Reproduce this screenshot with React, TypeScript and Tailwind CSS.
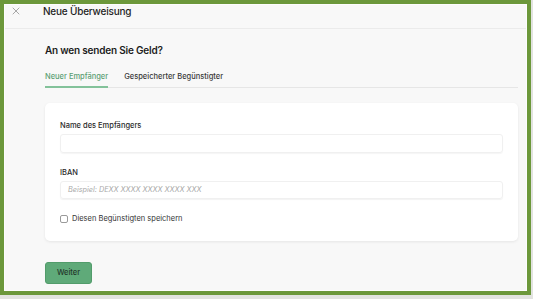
import { X } from "lucide-react";

export default function App() {
  return (
    <div className="w-[533px] h-[299px] bg-[#e2e3e0]" style={{ fontFamily: "Inter, 'Noto Sans', sans-serif" }}>
      <div className="w-[531px] h-[295px] border-4 border-[#6c983b] bg-[#f8f8f8] overflow-hidden">
        <div className="h-full border border-[#fdfdfd] flex flex-col">
          {/* header */}
          <div className="h-[24px] shrink-0 border-b border-[#ebebeb] flex items-start pl-[5px]">
            <X className="w-[12px] h-[12px] text-[#8c8c8c]" strokeWidth={1.5} />
            <div className="ml-[21px] text-[10px] leading-[12px] tracking-[-0.2px] font-medium text-[#1f1f1f]">Neue Überweisung</div>
          </div>

          {/* body */}
          <div className="pl-[40px] pr-[8px] pt-[14px] flex flex-col">
            <div className="text-[10px] leading-[14px] tracking-[-0.2px] font-semibold text-[#1c1c1c]">An wen senden Sie Geld?</div>

            {/* tabs */}
            <div className="mt-[15px] flex gap-[16px] border-b border-[#e6e6e6]">
              <div className="text-[7.5px] leading-[10px] font-medium text-[#5c9f74] pb-[4px] border-b-2 border-[#83c29a] -mb-px">Neuer Empfänger</div>
              <div className="text-[7.5px] leading-[10px] font-medium text-[#3a3a3a] pb-[4px]">Gespeicherter Begünstigter</div>
            </div>

            {/* card */}
            <div className="mt-[15px] bg-white rounded-[5px] shadow-[0_1px_3px_rgba(0,0,0,0.08)] px-[15px] pt-[18px] pb-[17px] flex flex-col">
              <label className="text-[7.5px] leading-[10px] font-medium text-[#2a2a2a]">Name des Empfängers</label>
              <div className="mt-[3px] h-[19px] rounded-[3px] border border-[#f0f0f0] shadow-[0_1px_1px_rgba(0,0,0,0.04)]" />

              <label className="mt-[15px] text-[7.5px] leading-[10px] font-medium text-[#2a2a2a]">IBAN</label>
              <div className="mt-[3px] h-[18px] rounded-[3px] border border-[#f0f0f0] shadow-[0_1px_1px_rgba(0,0,0,0.05)] flex items-center px-[7px]">
                <span className="text-[7.3px] italic text-[#a9a9a9]">Beispiel: DEXX XXXX XXXX XXXX XXX</span>
              </div>

              <div className="mt-[15px] h-[10px] flex items-center gap-[4px]">
                <div className="w-[8px] h-[8px] rounded-[2px] border border-[#9a9a9a] bg-white" />
                <span className="text-[7.5px] leading-[10px] text-[#333]">Diesen Begünstigten speichern</span>
              </div>
            </div>

            {/* button */}
            <div className="mt-[16px]">
              <button className="w-[47px] h-[22px] rounded-[3px] bg-[#5faa79] border border-[#529c6b] text-[7.5px] font-medium text-[#24382b]">
                Weiter
              </button>
            </div>
          </div>
        </div>
      </div>
    </div>
  );
}
